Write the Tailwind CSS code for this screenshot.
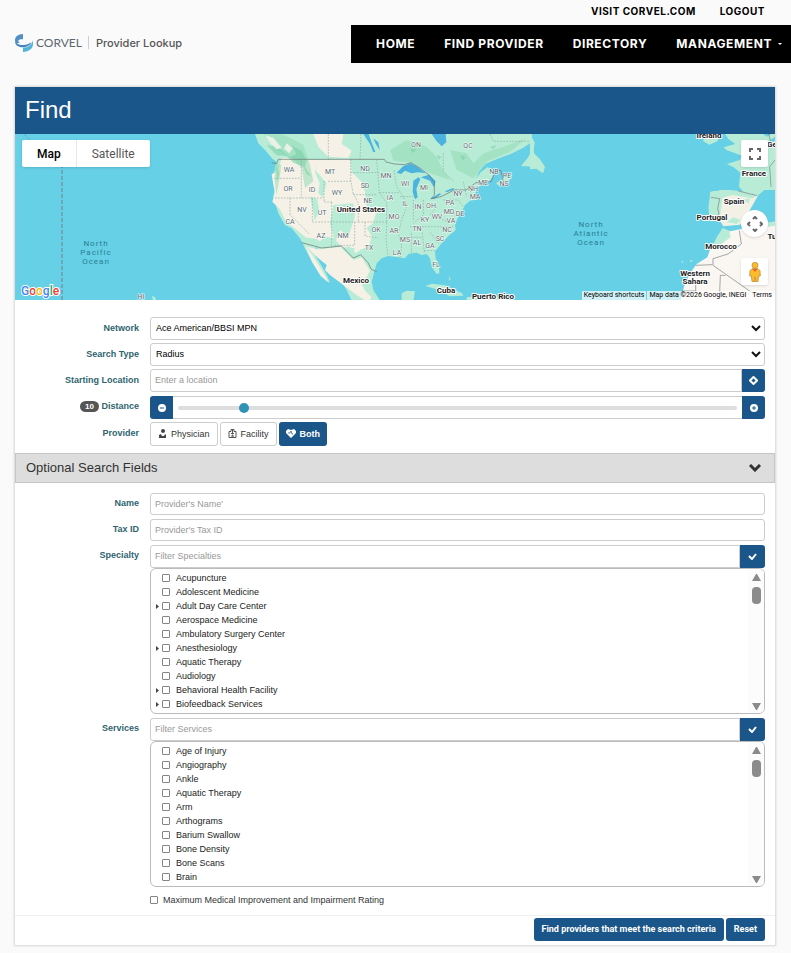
<!DOCTYPE html>
<html lang="en">
<head>
  <meta charset="UTF-8">
  <meta name="viewport" content="width=device-width, initial-scale=1">
  <title>Provider Lookup</title>
  <script src="https://cdn.jsdelivr.net/npm/@tailwindcss/browser@4"></script>
</head>
<body class="bg-[#fafafa] min-h-screen font-['Liberation_Sans',Arial,sans-serif] text-[9px] leading-[14px] text-[#333]">

  <header class="font-['Inter',sans-serif]">
    <div class="flex justify-end gap-6 h-[25px] items-center pr-[26px] pb-1 text-[10px] font-bold tracking-wider text-black">
      <a href="#">VISIT CORVEL.COM</a>
      <a href="#">LOGOUT</a>
    </div>
    <div class="flex justify-between">
      <a href="#" class="flex items-center h-[36px] pl-[15px] pb-px">
        <svg class="w-[18px] h-[18px]" viewBox="0 0 54 54">
          <path fill="#4f8fc6" d="M24 0C9 1 0 8 0 19c0 4 1 7 4 10 4-2 8-2 13-1-5-2-7-4-7-7 0-4 6-6 14-5z"/>
          <path fill="#4584bd" d="M0 23c1 10 9 16 22 17 13 0 24-5 27-15-6 5-14 8-24 8C14 33 5 30 0 23z"/>
          <path fill="#52b5d6" d="M54 18v13c0 13-12 22-30 23V41c15 0 27-8 30-23z"/>
        </svg>
        <span class="ml-[3px] font-['Lato',sans-serif] text-xs text-[#5b6770]">CORVEL</span>
        <span class="ml-[6px] h-[13px] border-l border-[#ccd]"></span>
        <span class="ml-[7px] text-[11px] font-medium text-[#555]">Provider Lookup</span>
      </a>
      <nav class="flex items-center gap-[29px] h-[38px] bg-black pl-[25px] pr-[9px] pb-px text-xs font-bold tracking-wider text-white">
        <a href="#">HOME</a>
        <a href="#">FIND PROVIDER</a>
        <a href="#">DIRECTORY</a>
        <a href="#" class="flex items-center gap-[6px]">MANAGEMENT
          <svg class="w-1 h-[2px]" viewBox="0 0 4 2"><path fill="#fff" d="M0 0h4L2 2z"/></svg>
        </a>
      </nav>
    </div>
  </header>

  <main class="mx-[15px] mr-4 mt-6 bg-white shadow-[0_0_2px_1px_rgba(0,0,0,0.15)]">
    <h1 class="bg-[#1b568a] h-[47px] px-[10px] text-2xl leading-[46px] text-white">Find</h1>

    <section class="relative h-[166px] overflow-hidden font-['Roboto',sans-serif]">
      <svg class="w-full h-full" viewBox="0 0 760 166" preserveAspectRatio="xMidYMid slice">
        <rect width="760" height="166" fill="#66d0e6"/>
        <!-- Date line and Hawaii -->
        <path d="M47 30V166" stroke="#6fa6b3" stroke-width="2" stroke-dasharray="4 2"/>
        <path d="M10 0q2 5 6 6" fill="none" stroke="#6fa6b3" stroke-dasharray="2 1"/>
        <path d="M137 162l3 1 1 3h-3z" fill="#b9ecd6"/>
        <!-- North America -->
        <g transform="translate(235 -4) scale(.33333)" stroke-linejoin="round">
          <path fill="#b9ecd6" d="M15 12l10 28 20 20 23 27 12 8-8 35 4 30-6 40 15 50 20 35 20 10 25 30 10 20 15 30 15 25 15 20 20 30 15 8-8-20-17-30-15-25-12-25 12-6 30 33 20 40 25 30 15 25 15 32h85l-20-32-5-25 8-30 7-25 15-15 20-7 30 4 20 3 10-13 25-4 15 7 15-3 10 13 5 25 15 22 8-2-1-25-10-20-2-20 20-25 20-22 22-18-2-15 8-20 12-20 10-20 15-13 25-4-10-13 5-20 15-10 22-10 15-20-5-18-15-5-20 15-15 20 10-22 20-24 40-16 40-15 30-15 30-20-2-28z"/>
          <path fill="#b9ecd6" d="M813 108l20-24 17-30 5 30 28 22-6 18-22-14zM738 160l30-20 20-8-10 20-30 16zM758 128l22 3-6 8zM526 468l20-7 40 5 50 24 4 7-42 2-22-16zM650 502l35-5 60 6v9h-95zM455 490l15-8 25 2-5 28h-35zM596 436l6 12-3 4zM700 83l50-12 5 10-35 8z"/>
          <path fill="#f5f1e6" d="M195 90l105-2 5 38 30 30 10 30 5 45 28 20-10 30-18 12 15 26-8 30-25 10-15 10-20-20-20 5-25-30-25-4-18 14-10-8-30-3-35-28-25-18-20-40-22-22 8-28-5-22-5-32 20-12 10-38 60 5zM170 350l40 8 60-8 40 40 25-8 25 40-10 20-20 10 15 30 20 20-10 15-35-22-40-30-40-30-15-15 5-15-25-20zM165 345l22 30 28 45 22 38-25-20-26-42zM190 12h90l-5 30 30 20-10 22-60-4-30-30z"/>
          <path fill="#b9ecd6" d="M250 225l60-5 5 40-20 60-25-20-15 40-15-60zM205 88l-8 34 32 36-10 44-14-12 4-30-14-34zM180 200l22 8 6 34-14 30-5-32zM285 350l30 5-5 12-20-4z"/>
          <path fill="#91ddb7" d="M40 12l60 2 60 30 20 60 10 50-25 20-10-60-30-30-50-30zM74 100l20 5-5 40-10 50-4-40zM420 60l50-30 60 20 30 30 20 40 20 30-60-20-50-30-60-8zM600 60l50 10 20 30 30-30 60-20 70-25-50 40-70 30-40 50-50-25z" opacity=".55"/>
          <path fill="#74cba2" opacity=".5" d="M50 45l30 5 40 30 20-8-15-25 30 15 15 30-5 20 20 30-15-10-10-22-30-12-20-20-30-2zM80 110l8 20-8 25zM560 75l15 5-8 10zM480 55l20 4-12 10zM630 75l18 5-10 12zM720 50l20-4-10 12z"/>
          <path fill="#e8f1e6" d="M45 15l25 8 25 30-15 5-20-20zM110 40l18 15-10 15-16-14z"/>
          <path fill="#4bb3dd" d="M440 128l20-20 22-8 20 10 25 20-22-3-20 3-20-8-12 10zM490 152l15-10 6 5-12 30 4 25-8 6-7-22zM512 142l25-8 20 20-5 18-12-20-15-6zM540 208l28-18 6 2-20 14zM584 184l25-10 5 4-22 8zM545 12l15 22 15 15 14-12-2-25zM340 12l20 30 10 25 6-2-12-30-8-23zM370 25l15 12 4 24-12-20z"/>
          <g fill="none" stroke="#8fa9a4" stroke-width="2" stroke-dasharray="5 4">
            <path d="M235 12v76M302 88v62M333 12l-3 76M72 145h82M154 92v90M75 204h145M120 204v50l60 60M154 182v22M187 204v72M187 276h138M245 217v136M222 154v62h28M235 154h67M302 128h85M302 150l8 44h70M310 190l15 30v55M314 276v70h-60M325 276h85M345 276v42l40 6M380 88l8 100 22 30v70l-2 34 5 55M388 188h60M432 120l8 50 20 30 10 30-15 40-10 40 10 35-5 40M450 200h40M490 210v60M480 290h130M520 210v45l-30 25M484 310v60M517 308l6 60M455 322h60M540 308l28 34M523 362h40M560 230l-20 25M580 210h45l15 20M560 260l40 20M580 70v55l30 28M640 155l10 45M655 165l10 30M720 12l10 22h110"/>
          </g>
          <path fill="none" stroke="#666f70" stroke-width="2" d="M65 98l15 3 5-13h318l5 8 25 6 30 2 20-6 30 18 25 20 15 20v40l-10 10 30-6 40-20h35l30-22 45-3 15-35 15 2 8 36M155 338l60 16 60-6 35 36 22-10 22 24 10 20 16 7"/>
        </g>
        <!-- Europe and Africa -->
        <g transform="translate(515 -4) scale(.33333)" stroke-linejoin="round">
          <path fill="#b9ecd6" d="M0 12l14 26-4 30 20 20 15 24-6 18-20-14-19 2zM522 12h52l-12 22-24 10-18-10zM585 12h150v168l-32 0-16 14-46-8-14-16 4-42-20-16-20-10 38-12 10-12-50-18-8-8 35-10-20-14z"/>
          <path fill="#66d0e6" d="M640 68l70-30 25-18v12l-40 30-40 16zM700 12h25l-15 8z"/>
          <path fill="#f3f1e6" d="M541 186l39-6 45 3 60 12-17 30-20 35-18 24-50 5-7-12-28-8-5-34z"/>
          <path fill="#b9ecd6" d="M541 186l39-6 45 3 58 12-15 10-60-10-30 8-10 70-28-4-5-34zM640 210l20-6-4 16zM610 262l22 8-12 12-30-6z"/>
          <path fill="#faf7f3" d="M578 300l22 4 30-6 50-16 55-6v234H452l10-40 18-40 20-28 32-20 12-34 20-20z"/>
          <path fill="#b9ecd6" d="M578 294l20 8 4 20-40 28-18 6 16-34zM712 278l23-4v14l-23 2zM455 392l6 3-5 4zM480 390l10 2-8 4z"/>
          <path fill="none" stroke="#77817f" stroke-width="2" d="M543 202l26 4-6 30 4 14-10 16M625 183l56 14M628 302l6 40-40 30-45 14v20l120 84M547 404l-50 2M571 436l-2 54M571 436h16M735 90l-16 20 4 60M716 12l10 40M497 455v28h-42"/>
        </g>
        <g id="map-labels" text-anchor="middle" stroke="#fff" paint-order="stroke" stroke-linejoin="round"></g>
        <g font-size="8" letter-spacing="1" fill="#287f92" text-anchor="middle">
          <text x="81" y="112">North</text><text x="81" y="121">Pacific</text><text x="81" y="130">Ocean</text>
          <text x="576" y="93">North</text><text x="576" y="102">Atlantic</text><text x="576" y="111">Ocean</text>
        </g>
      </svg>

      <div class="absolute left-[7px] top-[6px] flex h-[27px] rounded-[2px] bg-white text-xs shadow-sm">
        <button type="button" class="px-[15px] font-medium text-black">Map</button>
        <button type="button" class="px-[15px] border-l border-gray-200 text-[#565656]">Satellite</button>
      </div>

      <button type="button" aria-label="Toggle fullscreen" class="absolute right-[7px] top-[6px] size-[27px] rounded-[2px] bg-white flex items-center justify-center shadow-sm">
        <svg class="size-3" viewBox="0 0 12 12" fill="none" stroke="#666" stroke-width="2"><path d="M1 4V1h3M8 1h3v3M11 8v3H8M4 11H1V8"/></svg>
      </button>
      <button type="button" aria-label="Map camera controls" class="absolute right-[7px] top-[76px] size-[27px] rounded-full bg-white flex items-center justify-center shadow-sm">
        <svg class="size-4" viewBox="0 0 16 16" fill="none" stroke="#666" stroke-width="2"><path d="M6 3l2-2 2 2M6 13l2 2 2-2M3 6L1 8l2 2M13 6l2 2-2 2"/></svg>
      </button>
      <button type="button" aria-label="Street View" class="absolute right-[7px] top-[124px] size-[27px] rounded-[2px] bg-white flex items-center justify-center shadow-sm">
        <svg class="w-3 h-5" viewBox="0 0 36 60">
          <path fill="#fbbc2d" stroke="#b8842c" stroke-width="2" d="M9 20h18l6 6 1 16h-5l-2 17h-8V45h-2v14H9L7 42H2l1-16z"/>
          <circle cx="18" cy="10" r="9" fill="#fbbc2d" stroke="#b8842c" stroke-width="2"/>
          <path fill="#e8622c" d="M10 21h16l-8 9z"/>
        </svg>
      </button>

      <div class="absolute left-[6px] bottom-0">
        <svg class="w-10 h-4" viewBox="0 0 40 16">
          <text x="0" y="11" font-size="12" font-weight="500" stroke="#fff" stroke-width="2" paint-order="stroke"><tspan fill="#4285f4">G</tspan><tspan fill="#ea4335">o</tspan><tspan fill="#fbbc05">o</tspan><tspan fill="#4285f4">g</tspan><tspan fill="#34a853">l</tspan><tspan fill="#ea4335">e</tspan></text>
        </svg>
      </div>
      <div class="absolute right-0 bottom-0 flex gap-px text-[7px] leading-[9px] text-black">
        <button type="button" class="bg-white/70 px-[2px]">Keyboard shortcuts</button>
        <span class="bg-white/70 px-[2px]">Map data ©2026 Google, INEGI</span>
        <a href="#" class="bg-white/70 px-[3px]">Terms</a>
      </div>
    </section>

    <form onsubmit="return false">
      <div class="grid grid-cols-[124px_1fr] gap-x-[11px] gap-y-[3px] pt-[17px] pr-[10px] pb-[7px]">
        <label for="network" class="pt-1 text-right font-bold text-[#2f6470]">Network</label>
        <div class="relative">
          <select id="network" class="block appearance-none w-full h-[23px] rounded-[3px] border border-[#ccc] bg-white px-[5px] pb-[2px] text-black">
            <option>Ace American/BBSI MPN</option>
          </select>
          <svg class="pointer-events-none absolute right-1 top-2 w-[10px] h-[7px]" viewBox="0 0 10 7" fill="none" stroke="#111" stroke-width="2"><path d="M1 1l4 4 4-4"/></svg>
        </div>

        <label for="search_type" class="pt-1 text-right font-bold text-[#2f6470]">Search Type</label>
        <div class="relative">
          <select id="search_type" class="block appearance-none w-full h-[23px] rounded-[3px] border border-[#ccc] bg-white px-[5px] pb-[2px] text-black">
            <option>Radius</option>
          </select>
          <svg class="pointer-events-none absolute right-1 top-2 w-[10px] h-[7px]" viewBox="0 0 10 7" fill="none" stroke="#111" stroke-width="2"><path d="M1 1l4 4 4-4"/></svg>
        </div>

        <label for="location" class="pt-1 text-right font-bold text-[#2f6470]">Starting Location</label>
        <div class="flex h-[23px]">
          <input id="location" type="text" placeholder="Enter a location" class="min-w-0 grow rounded-l-[3px] border border-[#ccc] px-1 pb-[2px] placeholder:text-[#999]">
          <button type="button" aria-label="Use my location" class="w-[23px] rounded-r-[3px] bg-[#1b568a] flex items-center justify-center">
            <svg class="size-[9px]" viewBox="0 0 9 9" fill="none" stroke="#fff" stroke-width="2"><path d="M4.500 1L8 4.500 4.500 8 1 4.500z"/></svg>
          </button>
        </div>

        <label for="distance" class="pt-1 text-right font-bold text-[#2f6470]"><span class="inline-block rounded-full bg-[#555] px-[5px] text-[8px] leading-[11px] text-white">10</span> Distance</label>
        <div class="flex h-[24px] pt-px">
          <button type="button" aria-label="Decrease distance" class="w-[23px] rounded-l-[3px] bg-[#1b568a] flex items-center justify-center">
            <svg class="size-2" viewBox="0 0 8 8"><circle cx="4" cy="4" r="4" fill="#fff"/><path d="M2 4h4" stroke="#1b568a" stroke-width="1"/></svg>
          </button>
          <div class="flex grow items-center border-y border-[#ccc] px-[5px]">
            <input id="distance" type="range" min="0" max="90" value="10" class="appearance-none w-full h-[10px] bg-transparent [&::-webkit-slider-runnable-track]:h-1 [&::-webkit-slider-runnable-track]:rounded-full [&::-webkit-slider-runnable-track]:bg-[#ddd] [&::-webkit-slider-thumb]:appearance-none [&::-webkit-slider-thumb]:size-[10px] [&::-webkit-slider-thumb]:-mt-[3px] [&::-webkit-slider-thumb]:rounded-full [&::-webkit-slider-thumb]:bg-[#3093b5]">
          </div>
          <button type="button" aria-label="Increase distance" class="w-[23px] rounded-r-[3px] bg-[#1b568a] flex items-center justify-center">
            <svg class="size-2" viewBox="0 0 8 8"><circle cx="4" cy="4" r="4" fill="#fff"/><path d="M2 4h4M4 2v4" stroke="#1b568a" stroke-width="1"/></svg>
          </button>
        </div>

        <span class="pt-1 text-right font-bold text-[#2f6470]">Provider</span>
        <div class="flex h-6 gap-[2px]">
          <button type="button" class="flex items-center gap-1 rounded-[3px] border border-[#ccc] px-[7px] pb-px">
            <svg class="size-[9px]" viewBox="0 0 9 9" fill="#444"><circle cx="5" cy="2" r="2"/><path d="M1 9V6l2-1 1 2h2l1-2 1 1v3z"/></svg>
            Physician
          </button>
          <button type="button" class="flex items-center gap-1 rounded-[3px] border border-[#ccc] px-[7px] pb-px">
            <svg class="size-[9px]" viewBox="0 0 9 9" fill="none" stroke="#555"><path d="M1 8.500v-6h2v-2h3v2h2v6zM4.500 1v3M3 4.500h3M4 8V6h1v2"/></svg>
            Facility
          </button>
          <button type="button" class="flex items-center gap-1 rounded-[3px] bg-[#1b568a] px-[7px] pb-px font-bold text-white">
            <svg class="w-[10px] h-[9px]" viewBox="0 0 10 9"><path fill="#fff" d="M5 9L0 4V2l2-2 3 1 3-1 2 2v2z"/><path d="M2 4h2l1-2 1 3h1" fill="none" stroke="#1b568a" stroke-width=".7"/></svg>
            Both
          </button>
        </div>
      </div>

      <button type="button" class="flex w-full h-[30px] items-center justify-between border border-[#c6c6c6] bg-[#ddd] pl-[10px] pr-[13px] text-[13px]">
        Optional Search Fields
        <svg class="w-3 h-2" viewBox="0 0 12 8" fill="none" stroke="#333" stroke-width="3"><path d="M1 1l5 5 5-5"/></svg>
      </button>

      <div class="grid grid-cols-[124px_1fr] gap-x-[11px] gap-y-1 pt-[10px] pr-[10px] pb-2">
        <label for="name" class="pt-[3px] text-right font-bold text-[#2f6470]">Name</label>
        <input id="name" type="text" placeholder="Provider's Name'" class="h-[22px] rounded-[3px] border border-[#ccc] px-1 placeholder:text-[#999]">

        <label for="tax_id" class="pt-[3px] text-right font-bold text-[#2f6470]">Tax ID</label>
        <input id="tax_id" type="text" placeholder="Provider's Tax ID" class="h-[22px] rounded-[3px] border border-[#ccc] px-1 placeholder:text-[#999]">

        <label for="specialty" class="pt-[3px] text-right font-bold text-[#2f6470]">Specialty</label>
        <div>
          <div class="flex h-[23px]">
            <input id="specialty" type="text" placeholder="Filter Specialties" class="min-w-0 grow rounded-l-[3px] border border-[#ccc] px-1 pb-[2px] placeholder:text-[#999]">
            <button type="button" aria-label="Select specialties" class="w-[25px] rounded-r-[3px] bg-[#1b568a] flex items-center justify-center">
              <svg class="w-[9px] h-[7px]" viewBox="0 0 9 7" fill="none" stroke="#fff" stroke-width="2"><path d="M1 3l3 3 4-5"/></svg>
            </button>
          </div>
          <div class="flex h-[146px] overflow-hidden rounded-md border border-[#bbb]">
            <ul id="specialty-list" class="grow overflow-y-auto pt-[2px] pl-1 [scrollbar-width:none]"></ul>
            <svg class="w-4 h-[144px] bg-[#fcfcfc]" viewBox="0 0 16 144" fill="#8b8b8b"><path d="M4 12l4-7h1l4 7zM4 134h9l-4 7H8z"/><rect x="4" y="18" width="9" height="17" rx="4"/></svg>
          </div>
        </div>

        <label for="services" class="pt-[3px] text-right font-bold text-[#2f6470]">Services</label>
        <div>
          <div class="flex h-[23px]">
            <input id="services" type="text" placeholder="Filter Services" class="min-w-0 grow rounded-l-[3px] border border-[#ccc] px-1 pb-[2px] placeholder:text-[#999]">
            <button type="button" aria-label="Select services" class="w-[25px] rounded-r-[3px] bg-[#1b568a] flex items-center justify-center">
              <svg class="w-[9px] h-[7px]" viewBox="0 0 9 7" fill="none" stroke="#fff" stroke-width="2"><path d="M1 3l3 3 4-5"/></svg>
            </button>
          </div>
          <div class="flex h-[146px] overflow-hidden rounded-md border border-[#bbb]">
            <ul id="services-list" class="grow overflow-y-auto pt-[2px] pl-1 [scrollbar-width:none]"></ul>
            <svg class="w-4 h-[144px] bg-[#fcfcfc]" viewBox="0 0 16 144" fill="#8b8b8b"><path d="M4 12l4-7h1l4 7zM4 134h9l-4 7H8z"/><rect x="4" y="18" width="9" height="17" rx="4"/></svg>
          </div>
        </div>

        <label class="col-start-2 flex items-center gap-[5px] pt-[2px]">
          <input type="checkbox" class="appearance-none size-2 rounded-[1px] border border-[#858585] bg-white">
          Maximum Medical Improvement and Impairment Rating
        </label>
      </div>

      <div class="flex justify-end gap-[2px] border-t border-[#f0f0f0] pt-[2px] pr-[10px] pb-1 font-['Roboto',sans-serif]">
        <button type="submit" class="h-[23px] rounded-[3px] bg-[#1b568a] px-2 pb-px font-bold text-white">Find providers that meet the search criteria</button>
        <button type="reset" class="h-[23px] rounded-[3px] bg-[#1b568a] px-2 pb-px font-bold text-white">Reset</button>
      </div>
    </form>
  </main>

  <script>
    // a leading ">" marks an entry that can be expanded
    const specialties = ["Acupuncture", "Adolescent Medicine", ">Adult Day Care Center", "Aerospace Medicine",
      "Ambulatory Surgery Center", ">Anesthesiology", "Aquatic Therapy", "Audiology",
      ">Behavioral Health Facility", ">Biofeedback Services", ""];
    const services = ["Age of Injury", "Angiography", "Ankle", "Aquatic Therapy", "Arm", "Arthograms",
      "Barium Swallow", "Bone Density", "Bone Scans", "Brain", ""];

    function fillList(id, items) {
      document.getElementById(id).innerHTML = items.map(item => `
        <li class="flex h-[14px] items-center">
          <svg class="w-[7px] h-[5px]" viewBox="0 0 7 5">${item[0] === ">" ? '<path fill="#444" d="M1 0l3 2.500L1 5z"/>' : ""}</svg>
          <label class="flex items-center gap-[6px] text-[#222]">
            <input type="checkbox" class="appearance-none size-2 rounded-[1px] border border-[#858585] bg-white">
            ${item.replace(">", "")}
          </label>
        </li>`).join("");
    }
    fillList("specialty-list", specialties);
    fillList("services-list", services);

    const states = [
      ["WA", 274, 38], ["MT", 315, 40], ["ND", 350, 37], ["MN", 371, 44], ["OR", 273, 57], ["ID", 297, 58],
      ["WY", 322, 61], ["SD", 350, 54], ["WI", 390, 52], ["MI", 409, 56], ["NE", 353, 69], ["IA", 375, 66],
      ["NV", 287, 78], ["UT", 307, 81], ["IL", 390, 72], ["IN", 403, 75], ["OH", 416, 74], ["PA", 435, 71],
      ["NY", 443, 62], ["MD", 434, 80], ["DE", 445, 82], ["CA", 275, 90], ["MO", 379, 85], ["KY", 410, 88],
      ["WV", 422, 85], ["VA", 436, 89], ["AZ", 306, 104], ["NM", 328, 104], ["OK", 361, 98], ["AR", 379, 99],
      ["TN", 402, 97], ["NC", 432, 98], ["TX", 354, 116], ["MS", 390, 108], ["AL", 402, 111], ["GA", 415, 114],
      ["SC", 425, 107], ["LA", 382, 121], ["FL", 421, 133], ["ME", 468, 51], ["NH", 458, 57], ["MA", 460, 65],
      ["NB", 479, 40], ["PE", 492, 44], ["NS", 489, 52], ["ON", 401, 13], ["QC", 453, 14], ["HI", 126, 165]
    ];
    const countries = [
      ["United States", 346, 78], ["Mexico", 341, 149], ["Cuba", 431, 159], ["Puerto Rico", 478, 165],
      ["Ireland", 694, 4], ["France", 739, 42], ["Spain", 719, 70], ["Portugal", 697, 86], ["Morocco", 706, 115],
      ["Western", 680, 142], ["Sahara", 680, 150], ["Ge", 757, 13], ["Tu", 757, 105]
    ];
    document.getElementById("map-labels").innerHTML =
      states.map(([t, x, y]) => `<text x="${x}" y="${y}" font-size="7" stroke-width="1" fill="#56666b">${t}</text>`).join("") +
      countries.map(([t, x, y]) => `<text x="${x}" y="${y}" font-size="8" font-weight="700" stroke-width="2" fill="#222">${t}</text>`).join("");
  </script>
</body>
</html>
